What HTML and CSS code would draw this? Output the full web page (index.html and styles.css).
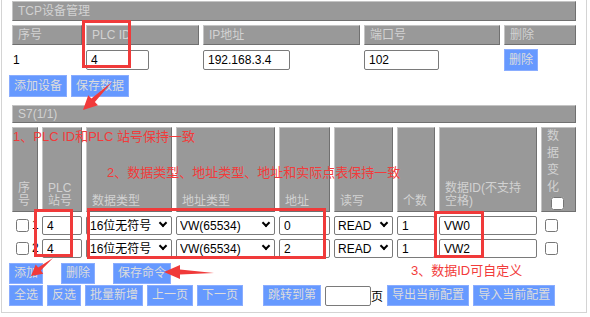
FILE: index.html
```html
<!DOCTYPE html>
<html lang="zh-CN">
<head>
    <meta charset="UTF-8">
    <title>PLC 设备配置</title>
    <link rel="stylesheet" href="styles.css">
</head>
<body>
<div class="page">
    <div class="panel">
        <table class="grid tcp">
            <colgroup>
                <col class="w-no"><col class="w-id"><col class="w-ip"><col class="w-port"><col class="w-del">
            </colgroup>
            <tr><th class="bar" colspan="5">TCP设备管理</th></tr>
            <tr class="head">
                <th>序号</th><th>PLC ID</th><th>IP地址</th><th>端口号</th><th>删除</th>
            </tr>
            <tr class="row">
                <td class="num">1</td>
                <td><input type="text" class="in-id" value="4"></td>
                <td><input type="text" class="in-ip" value="192.168.3.4"></td>
                <td><input type="text" class="in-port" value="102"></td>
                <td><button class="btn btn-tall">删除</button></td>
            </tr>
        </table>
        <div class="actions">
            <button class="btn btn-tall">添加设备</button>
            <button class="btn btn-tall">保存数据</button>
        </div>

        <table class="grid s7">
            <colgroup>
                <col class="c-no"><col class="c-plc"><col class="c-type"><col class="c-addr-type">
                <col class="c-addr"><col class="c-rw"><col class="c-count"><col class="c-id"><col class="c-chg">
            </colgroup>
            <tr><th class="bar" colspan="9">S7(1/1)</th></tr>
            <tr class="head">
                <th>序号</th>
                <th>PLC 站号</th>
                <th>数据类型</th>
                <th>地址类型</th>
                <th>地址</th>
                <th>读写</th>
                <th>个数</th>
                <th>数据ID(不支持空格)</th>
                <th class="chg">数据变化<input type="checkbox" class="chk-all"></th>
            </tr>
            <tr>
                <td class="sel"><input type="checkbox">1</td>
                <td><input type="text" value="4"></td>
                <td><span class="pick"><select><option>16位无符号</option></select></span></td>
                <td><span class="pick"><select><option>VW(65534)</option></select></span></td>
                <td><input type="text" value="0"></td>
                <td><span class="pick"><select><option>READ</option></select></span></td>
                <td><input type="text" value="1"></td>
                <td><input type="text" value="VW0"></td>
                <td class="sel"><input type="checkbox"></td>
            </tr>
            <tr>
                <td class="sel"><input type="checkbox">2</td>
                <td><input type="text" value="4"></td>
                <td><span class="pick"><select><option>16位无符号</option></select></span></td>
                <td><span class="pick"><select><option>VW(65534)</option></select></span></td>
                <td><input type="text" value="2"></td>
                <td><span class="pick"><select><option>READ</option></select></span></td>
                <td><input type="text" value="1"></td>
                <td><input type="text" value="VW2"></td>
                <td class="sel"><input type="checkbox"></td>
            </tr>
        </table>
        <div class="actions cmd-row">
            <button class="btn">添加</button>
            <button class="btn spaced">删除</button>
            <button class="btn spaced">保存命令</button>
        </div>
        <div class="actions page-row">
            <button class="btn">全选</button>
            <button class="btn">反选</button>
            <button class="btn">批量新增</button>
            <button class="btn">上一页</button>
            <button class="btn">下一页</button>
            <button class="btn spaced">跳转到第</button>
            <input type="text" class="in-page"><span class="unit">页</span>
            <button class="btn">导出当前配置</button>
            <button class="btn">导入当前配置</button>
        </div>
    </div>

    <!-- annotations drawn on top of the screenshot -->
    <div class="mark mark-id"></div>
    <div class="mark mark-plc"></div>
    <div class="mark mark-type"></div>
    <div class="mark mark-dataid"></div>
    <p class="note note-1">1、PLC ID和PLC 站号保持一致</p>
    <p class="note note-2">2、数据类型、地址类型、地址和实际点表保持一致</p>
    <p class="note note-3">3、数据ID可自定义</p>
    <svg class="arrows" width="590" height="317" viewBox="0 0 590 317">
        <polygon points="112,82 94.9,102 98,105.2 83,110 88.2,95.2 91.4,98.4"/>
        <polygon points="53,258 40.8,270.5 43.3,273.7 31,276 35.7,264.4 38.2,267.5"/>
        <polygon points="214,273 180,274.5 180,279 164,272 180,265 180,269.5"/>
    </svg>
</div>
</body>
</html>
```

FILE: styles.css
```css
body {
    margin: 0;
    font-family: "Liberation Sans", "Noto Sans CJK SC", sans-serif;
    font-size: 12px;
    color: #000;
    background: #fff;
}
.page {
    position: relative;
    width: 590px;
    height: 317px;
    overflow: hidden;
}
.panel {
    margin-left: 1px;
    width: 586px;
    box-sizing: border-box;
    border: 1px solid #d4d4d4;
    border-top: none;
    padding: 0 0 6px 6px;
}

/* tables */
.grid {
    table-layout: fixed;
    border-collapse: separate;
    border-spacing: 4px;
    width: 572px;
}
.tcp {
    margin-top: -3px;
}
.s7 {
    margin-top: 4px;
}
.grid th {
    background: #999;
    color: #d2d2d2;
    font-weight: normal;
    text-align: left;
    border: 1px solid;
    border-color: #c4c4c4 #707070 #707070 #c4c4c4;
    padding: 0 5px;
    line-height: 18px;
}
.s7 .bar {
    line-height: 16px;
}
.grid td {
    padding: 0;
    white-space: nowrap;
}
.w-no { width: 70px; }
.w-id { width: 113px; }
.w-ip { width: 157px; }
.w-port { width: 136px; }
.w-del { width: 72px; }

.c-no { width: 26px; }
.c-plc { width: 40px; }
.c-type { width: 86px; }
.c-addr-type { width: 99px; }
.c-addr { width: 51px; }
.c-rw { width: 59px; }
.c-count { width: 38px; }
.c-id { width: 98px; }
.c-chg { width: 35px; }

.s7 .head th {
    vertical-align: bottom;
    line-height: 13px;
    padding-bottom: 3px;
}
.s7 .head th.chg {
    line-height: 17px;
    padding-top: 0;
    padding-bottom: 1px;
}
.chk-all {
    display: block;
    margin: 1px 0 0 4px;
}

/* inputs */
input[type="text"], select {
    box-sizing: border-box;
    font-family: inherit;
    font-size: 12px;
    color: #000;
    background: #fff;
    border: 1px solid #7a7a7a;
    border-radius: 2px;
    margin: 0;
}
input[type="text"] {
    padding: 0 4px;
}
.row td {
    height: 22px;
}
.tcp .num {
    padding-left: 1px;
}
.tcp input {
    height: 20px;
    vertical-align: middle;
}
.in-id { width: 63px; }
.in-ip { width: 87px; }
.in-port { width: 75px; }

.s7 td {
    height: 19px;
    line-height: 17px;
}
.s7 td input[type="text"], .s7 td select {
    display: block;
    width: 100%;
    height: 19px;
}
.s7 td select {
    appearance: none;
    padding: 0 14px 0 3px;
}
.pick {
    position: relative;
    display: block;
}
.pick::after {
    content: "";
    position: absolute;
    right: 6px;
    top: 4px;
    width: 4px;
    height: 4px;
    border-right: 2px solid #000;
    border-bottom: 2px solid #000;
    transform: rotate(45deg);
    pointer-events: none;
}
.s7 td.sel input {
    vertical-align: middle;
}

/* buttons */
.actions {
    display: flex;
    align-items: center;
    gap: 4px;
    margin-left: 1px;
}
.btn {
    font-family: inherit;
    font-size: 12px;
    background: #6699ff;
    color: #dcdcdc;
    border: 1px solid #8aadff;
    padding: 0 4px;
    height: 21px;
    line-height: 19px;
}
.btn-tall {
    height: 22px;
}
.cmd-row {
    margin-top: 1px;
}
.page-row {
    margin-top: 1px;
}
.cmd-row .spaced {
    margin-left: 14px;
}
.page-row .spaced {
    margin-left: 16px;
}
.in-page {
    width: 46px;
    height: 20px;
}
.unit {
    margin-left: -4px;
    font-size: 12px;
}

/* annotations */
.mark {
    position: absolute;
    border: 3px solid #f03a3a;
    box-sizing: border-box;
}
.mark-id { left: 82px; top: 20px; width: 49px; height: 48px; }
.mark-plc { left: 34px; top: 209px; width: 39px; height: 48px; }
.mark-type { left: 87px; top: 208px; width: 239px; height: 51px; }
.mark-dataid { left: 434px; top: 211px; width: 50px; height: 47px; }

.note {
    position: absolute;
    margin: 0;
    color: #f23b3b;
    font-size: 13px;
    line-height: 16px;
    white-space: nowrap;
}
.note-1 { left: 13px; top: 129px; }
.note-2 { left: 107px; top: 165px; }
.note-3 { left: 411px; top: 263px; }

.arrows {
    position: absolute;
    left: 0;
    top: 0;
}
.arrows polygon {
    fill: #f03a3a;
}
```
